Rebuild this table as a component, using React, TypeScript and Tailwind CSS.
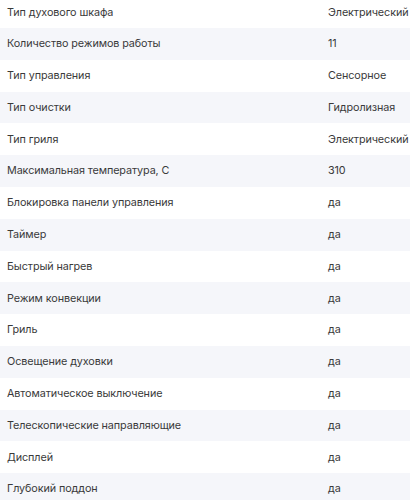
import React from "react";

const rows: [string, string][] = [
  ["Тип духового шкафа", "Электрический"],
  ["Количество режимов работы", "11"],
  ["Тип управления", "Сенсорное"],
  ["Тип очистки", "Гидролизная"],
  ["Тип гриля", "Электрический"],
  ["Максимальная температура, С", "310"],
  ["Блокировка панели управления", "да"],
  ["Таймер", "да"],
  ["Быстрый нагрев", "да"],
  ["Режим конвекции", "да"],
  ["Гриль", "да"],
  ["Освещение духовки", "да"],
  ["Автоматическое выключение", "да"],
  ["Телескопические направляющие", "да"],
  ["Дисплей", "да"],
  ["Глубокий поддон", "да"],
];

export default function App() {
  return (
    <div
      className="w-[410px] h-[500px] overflow-hidden bg-white"
      style={{ fontFamily: "Inter, 'Noto Sans', sans-serif" }}
    >
      <div className="-mt-[3.8px] flex flex-col">
        {rows.map(([k, v], i) => (
          <div
            key={i}
            className={`flex items-center shrink-0 h-[31.8px] pt-[1px] text-[10.8px] tracking-[-0.1px] text-[#3a3a3a] ${i % 2 === 1 ? "bg-[#f5f6fa]" : "bg-white"}`}
          >
            <div className="w-[328px] shrink-0 pl-[7px] whitespace-nowrap">{k}</div>
            <div className="shrink-0 whitespace-nowrap">{v}</div>
          </div>
        ))}
      </div>
    </div>
  );
}
